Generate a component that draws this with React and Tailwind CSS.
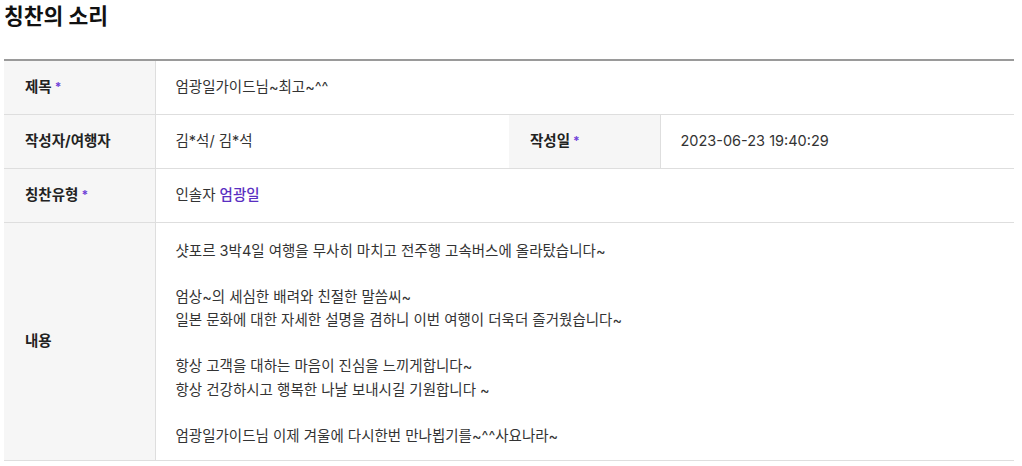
import React from "react";

const lines = [
  "샷포르 3박4일 여행을 무사히 마치고 전주행 고속버스에 올라탔습니다~",
  "",
  "엄상~의 세심한 배려와 친절한 말씀씨~",
  "일본 문화에 대한 자세한 설명을 겸하니 이번 여행이 더욱더 즐거웠습니다~",
  "",
  "항상 고객을 대하는 마음이 진심을 느끼게합니다~",
  "항상 건강하시고 행복한 나날 보내시길 기원합니다 ~",
  "",
  "엄광일가이드님 이제 겨울에 다시한번 만나뵙기를~^^사요나라~",
];

function Label({ children, required }) {
  return (
    <th className="bg-[#f6f6f6] border-r border-[#dedede] pl-[21px] text-left align-middle font-bold text-[14.5px] text-[#222]">
      {children}
      {required && <span className="ml-[3px] text-[12px] text-[#6f3fd8] relative -top-[1px]">*</span>}
    </th>
  );
}

export default function App() {
  return (
    <div className="bg-white px-[4px] pr-[8px] font-['Inter','Noto_Sans_CJK_KR',sans-serif] text-[#333]">
      <h2 className="pt-[1px] text-[21.5px] font-bold leading-[30px] text-[#111]">칭찬의 소리</h2>

      <table className="mt-[28px] w-[1010px] table-fixed border-collapse border-t-2 border-t-[#9a9a9a]">
        <colgroup>
          <col className="w-[151px]" />
          <col className="w-[354px]" />
          <col className="w-[151px]" />
          <col className="w-[354px]" />
        </colgroup>
        <tbody className="text-[14.5px]">
          <tr className="h-[54px] border-b border-[#dedede]">
            <Label required>제목</Label>
            <td colSpan={3} className="pl-[20px]">엄광일가이드님~최고~^^</td>
          </tr>
          <tr className="h-[54px] border-b border-[#dedede]">
            <Label>작성자/여행자</Label>
            <td className="pl-[20px]">김*석/ 김*석</td>
            <Label required>작성일</Label>
            <td className="pl-[20px]">2023-06-23 19:40:29</td>
          </tr>
          <tr className="h-[54px] border-b border-[#dedede]">
            <Label required>칭찬유형</Label>
            <td colSpan={3} className="pl-[20px]">
              인솔자 <span className="font-medium text-[#5a2fc2]">엄광일</span>
            </td>
          </tr>
          <tr className="border-b border-[#dedede]">
            <Label>내용</Label>
            <td colSpan={3} className="pl-[20px] pt-[16px] pb-[13px] leading-[23.2px]">
              {lines.map((l, i) => (
                <div key={i} className="h-[23.2px]">{l}</div>
              ))}
            </td>
          </tr>
        </tbody>
      </table>
    </div>
  );
}
